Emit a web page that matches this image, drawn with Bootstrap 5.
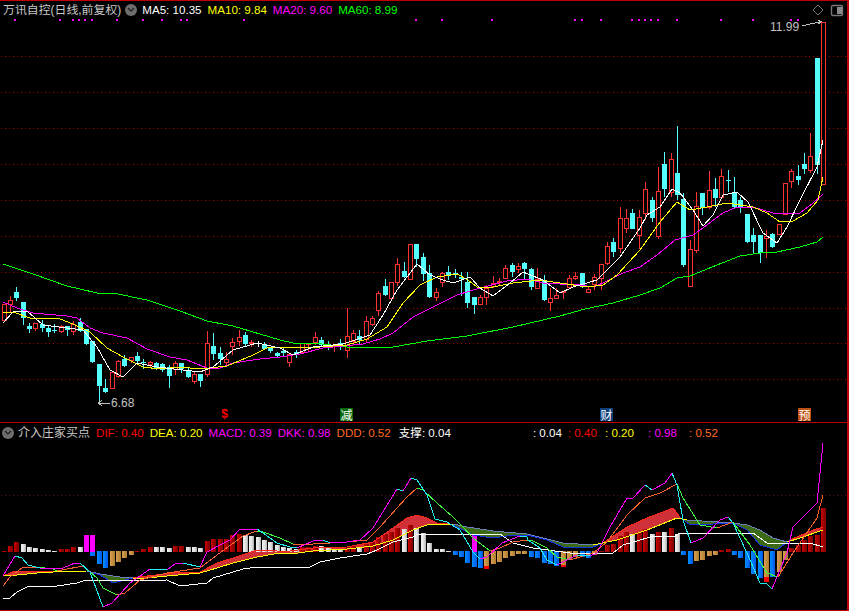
<!DOCTYPE html>
<html lang="zh">
<head>
<meta charset="utf-8">
<title>万讯自控</title>
<link rel="stylesheet" href="https://cdn.jsdelivr.net/npm/bootstrap@5.3.0/dist/css/bootstrap.min.css">
<style>
html,body{background:#000;margin:0;overflow:hidden}
.term{width:849px;height:611px;background:#000;font-family:"Liberation Sans","Noto Sans CJK SC",sans-serif;font-size:11.6px;line-height:14px;-webkit-font-smoothing:none}
.layer{width:849px;height:611px;shape-rendering:crispEdges}
.pane-up{height:423px;border-top:1px solid #c00000;border-bottom:1px solid #c00000;border-right:2px solid #c00000;width:849px;flex:none}
.pane-low{height:188px;border-bottom:1px solid #c00000;border-right:2px solid #c00000;width:849px;flex:none}
.legend{height:18px;padding-left:3px;white-space:nowrap}
.legend-low{height:18px;padding-left:2px;padding-top:1px;white-space:nowrap}
.ttl{color:#c8c8c8;font-size:11.9px;letter-spacing:0}
.ttl-low{color:#c8c8c8;font-size:12px;margin-left:4px;margin-right:6px}
.drop{width:12px;height:12px;border-radius:50%;background:#6e6e6e;flex:none;display:flex;align-items:center;justify-content:center}
.t-wh{color:#fff}.t-ye{color:#ff0}.t-ma{color:#f0f}.t-gr{color:#0f0}.t-re{color:#f00}.t-or{color:#ff6a20}
.up-items{gap:6px;margin-left:5px}
.low-items{gap:6px}
.gap-sup{margin-left:2px}
.gap-far{margin-left:76px}
.gap-near{margin-left:2px}
.gap-mid{margin-left:8px}
.gap-mid2{margin-left:6px}
.chip{width:13px;height:13px;font-size:12px;line-height:13px;text-align:center;color:#fff;left:0;top:408px;font-family:"Noto Sans CJK SC",sans-serif}
.chip-g{background:#0a6a0a;left:340px}
.chip-b{background:#0f3f7c;left:600px}
.chip-o{background:#c0500f;left:798px}
.chip-s{color:#f00;background:none;left:218px;font-weight:700;font-family:"Liberation Sans",sans-serif;font-size:12px}
.price{color:#c0c0c0;font-size:12px;line-height:14px}
.price-hi{left:770px;top:20px}
.price-lo{left:111px;top:396px}
</style>
</head>
<body>
<div class="term position-relative overflow-hidden">
  <svg id="chart" class="layer position-absolute top-0 start-0" viewBox="0 0 849 611" xmlns="http://www.w3.org/2000/svg"></svg>
  <div class="position-relative d-flex flex-column">
    <section class="pane-up">
      <div class="legend d-flex align-items-center">
        <span class="ttl">万讯自控(日线,前复权)</span>
        <span class="drop ms-1"><svg width="8" height="6" viewBox="0 0 8 6"><path d="M1 1l3 3 3-3" fill="none" stroke="#222" stroke-width="1.4"/></svg></span>
        <div class="d-flex up-items">
          <span class="t-wh">MA5: 10.35</span>
          <span class="t-ye">MA10: 9.84</span>
          <span class="t-ma">MA20: 9.60</span>
          <span class="t-gr">MA60: 8.99</span>
        </div>
      </div>
    </section>
    <section class="pane-low">
      <div class="legend-low d-flex align-items-center">
        <span class="drop"><svg width="8" height="6" viewBox="0 0 8 6"><path d="M1 1l3 3 3-3" fill="none" stroke="#222" stroke-width="1.4"/></svg></span>
        <span class="ttl-low">介入庄家买点</span>
        <div class="d-flex low-items">
          <span class="t-re">DIF: 0.40</span>
          <span class="t-ye">DEA: 0.20</span>
          <span class="t-ma">MACD: 0.39</span>
          <span class="t-ma">DKK: 0.98</span>
          <span class="t-or">DDD: 0.52</span>
          <span class="t-wh gap-sup">支撑: 0.04</span>
          <span class="t-wh gap-far">: 0.04</span>
          <span class="t-re">: 0.40</span>
          <span class="t-ye gap-near">: 0.20</span>
          <span class="t-ma gap-mid">: 0.98</span>
          <span class="t-or gap-mid2">: 0.52</span>
        </div>
      </div>
    </section>
  </div>
  <span class="price price-hi position-absolute">11.99</span>
  <span class="price price-lo position-absolute">6.68</span>
  <span class="chip chip-s position-absolute">$</span>
  <span class="chip chip-g position-absolute">减</span>
  <span class="chip chip-b position-absolute">财</span>
  <span class="chip chip-o position-absolute">预</span>
</div>
<script src="https://cdn.jsdelivr.net/npm/bootstrap@5.3.0/dist/js/bootstrap.bundle.min.js"></script>
<script>
var out=[];
function rect(x,y,w,h,f){out.push('<rect x="'+x+'" y="'+y+'" width="'+w+'" height="'+h+'" fill="'+f+'"/>');}
function pts(a){return a.map(function(p){return p[0]+','+p[1]}).join(' ');}
function poly(a,s,w){out.push('<polyline points="'+pts(a)+'" fill="none" stroke="'+s+'" stroke-width="'+(w||1)+'"/>');}
function xAt(i){return Math.round(3.5+6.353*i);}

out.push('<defs>'+
'<linearGradient id="gr"><stop offset="0" stop-color="#d00000"/><stop offset=".5" stop-color="#a00000"/><stop offset="1" stop-color="#800000"/></linearGradient>'+
'<linearGradient id="gw"><stop offset="0" stop-color="#f0f0f0"/><stop offset=".6" stop-color="#e0e0e0"/><stop offset="1" stop-color="#a8a8a8"/></linearGradient>'+
'<linearGradient id="gb"><stop offset="0" stop-color="#0090ff"/><stop offset="1" stop-color="#0058e8"/></linearGradient>'+
'<linearGradient id="gt"><stop offset="0" stop-color="#d8a050"/><stop offset="1" stop-color="#b07c30"/></linearGradient>'+
'</defs>');

/* grid */
[56,92,128,164,200,236,272,308,343,379].forEach(function(y){for(var x=1;x<846;x+=4){rect(x,y,1,1,'#a00000');}});
for(var gx=1;gx<846;gx+=4){rect(gx,495,1,1,'#601010');}
/* axis ticks */
for(var y=56;y<422;y+=17.9){rect(847,Math.round(y),2,1,'#c00000');}
/* signal dots */
[15,60,73,79,85,92,117,143,162,181,187,244,416,442,492,575,582,601,632,639,645,651,658,677,721,753,791,798].forEach(function(x){rect(x-1,19,2,2,'#ff00ff');});

/* candles: wickTop, bodyTop, bodyBottom, wickBottom, type */
var C=[
[304,304,321,321,'r'],[296,300,305,312,'r'],[287,292,298,301,'c'],[302,302,318,325,'c'],[323,326,329,333,'c'],[323,323,329,331,'r'],[320,324,328,332,'c'],[325,328,332,337,'c'],[324,330,331,333,'c'],[325,326,332,333,'r'],
[326,326,330,336,'c'],[321,324,332,335,'r'],[318,322,331,332,'c'],[329,329,344,345,'c'],[341,341,362,363,'c'],[364,364,386,405,'c'],[379,388,392,393,'c'],[372,372,389,389,'r'],[360,361,377,378,'r'],[355,359,366,367,'c'],
[357,357,361,363,'r'],[352,356,361,364,'c'],[359,362,363,369,'c'],[361,362,365,368,'r'],[362,363,369,370,'c'],[363,364,370,372,'c'],[365,367,376,388,'c'],[361,363,370,375,'r'],[363,363,369,373,'c'],[367,371,377,378,'c'],
[372,374,382,384,'r'],[374,374,381,387,'c'],[331,343,375,377,'r'],[333,346,354,360,'c'],[347,353,359,365,'c'],[352,359,363,365,'r'],[338,342,347,355,'r'],[330,337,342,346,'r'],[332,335,344,347,'c'],[340,342,344,347,'r'],
[341,343,344,347,'w'],[342,344,349,350,'c'],[348,348,351,353,'c'],[352,353,356,357,'c'],[348,351,353,356,'c'],[354,354,363,367,'r'],[350,352,354,358,'c'],[343,343,353,354,'r'],[343,343,345,351,'r'],[332,337,343,345,'r'],
[337,340,345,347,'c'],[341,344,347,350,'c'],[344,345,347,352,'r'],[339,343,347,350,'c'],[308,336,351,358,'r'],[330,333,342,345,'r'],[330,336,340,345,'c'],[316,321,340,343,'r'],[316,318,325,326,'r'],[291,293,311,316,'r'],
[279,286,295,296,'c'],[282,282,299,299,'r'],[258,264,283,286,'r'],[262,271,277,278,'c'],[244,244,280,280,'r'],[244,244,259,267,'c'],[253,257,274,281,'c'],[265,273,297,298,'c'],[288,292,298,301,'r'],[272,273,283,287,'r'],
[266,272,276,280,'c'],[269,273,274,278,'c'],[272,277,279,296,'c'],[272,282,303,308,'c'],[297,297,305,314,'c'],[295,297,305,305,'r'],[285,288,298,305,'r'],[276,283,287,288,'r'],[278,281,283,285,'r'],[265,268,279,279,'r'],
[263,265,272,277,'c'],[263,266,270,273,'r'],[262,263,269,279,'c'],[268,269,287,290,'c'],[268,279,289,289,'r'],[275,281,300,301,'c'],[288,298,303,311,'r'],[288,295,299,299,'r'],[291,291,293,299,'r'],[275,278,288,289,'r'],
[272,276,279,280,'r'],[273,273,285,288,'c'],[286,289,293,293,'r'],[274,277,285,290,'r'],[264,264,279,290,'r'],[242,246,264,265,'r'],[238,242,252,257,'c'],[207,218,249,253,'r'],[209,218,229,233,'r'],[209,213,229,229,'c'],
[210,217,236,249,'r'],[182,189,214,220,'r'],[197,200,218,222,'c'],[167,191,237,239,'r'],[152,164,189,197,'c'],[153,159,193,197,'r'],[126,173,195,200,'c'],[193,199,265,267,'c'],[240,249,287,287,'r'],[192,206,251,253,'r'],
[193,193,208,215,'c'],[171,190,208,209,'r'],[178,189,198,207,'c'],[169,176,198,199,'r'],[170,180,181,192,'c'],[177,192,207,208,'c'],[197,200,207,213,'c'],[214,214,242,243,'c'],[228,235,242,253,'c'],[235,235,253,263,'c'],
[230,236,239,258,'r'],[233,234,247,248,'c'],[224,224,235,235,'r'],[183,183,215,215,'r'],[169,171,182,188,'r'],[165,176,180,185,'c'],[153,164,169,174,'c'],[133,156,171,173,'r'],[58,58,165,174,'c'],[22,22,185,185,'r']
];
var CY='#54ffff',RD='#ff3232';
C.forEach(function(k,i){
  var x=xAt(i), col=k[4]=='r'?RD:(k[4]=='w'?'#fff':CY);
  if(k[0]<k[1]) rect(x,k[0],1,k[1]-k[0],col);
  if(k[3]>k[2]) rect(x,k[2],1,k[3]-k[2],col);
  if(k[4]=='r'){
    rect(x-2,k[1],5,Math.max(k[2]-k[1],2),col);
    if(k[2]-k[1]>2) rect(x-1,k[1]+1,3,k[2]-k[1]-2,'#000');
  } else {
    rect(x-2,k[1],5,Math.max(k[2]-k[1],1),col);
  }
});

/* moving averages */
var MA60=[[3,264],[33,274],[67,286],[97,293],[113,293],[147,300],[180,311],[207,321],[233,326],[280,340],[293,343],[313,343],[347,347],[393,347],[427,341],[467,336],[513,327],[560,316],[585,309],[613,303],[640,295],[660,288],[677,278],[690,276],[717,265],[740,256],[760,253],[777,252],[800,247],[817,242],[823,237]];
var MA20=[[3,302],[17,308],[33,313],[67,316],[77,318],[90,328],[103,333],[127,338],[147,349],[170,357],[187,360],[207,368],[220,368],[233,363],[260,359],[280,357],[300,354],[323,348],[363,344],[380,339],[393,333],[413,317],[437,305],[457,295],[480,288],[507,281],[527,279],[543,283],[560,284],[580,285],[593,287],[603,283],[623,273],[640,267],[657,255],[675,240],[693,235],[707,225],[723,213],[737,207],[753,207],[773,213],[800,213],[813,203],[823,194]];
var MA10=[[3,312],[13,312],[30,318],[60,319],[73,324],[90,332],[107,348],[123,357],[143,367],[160,369],[180,367],[200,369],[227,366],[253,355],[267,348],[280,347],[293,348],[320,347],[347,345],[367,339],[387,327],[403,303],[420,285],[437,277],[457,274],[468,280],[477,287],[493,287],[513,283],[540,280],[560,283],[587,287],[603,285],[617,275],[640,250],[660,222],[677,202],[690,210],[707,207],[727,203],[753,207],[767,213],[780,222],[793,221],[807,213],[818,200],[823,177]];
var MA5=[[3,323],[13,312],[27,311],[43,325],[67,328],[83,330],[97,347],[110,370],[123,377],[137,363],[157,367],[183,370],[200,372],[213,367],[233,350],[257,343],[280,348],[293,355],[313,347],[343,344],[370,335],[383,315],[397,290],[417,264],[430,275],[443,280],[453,283],[470,277],[480,288],[493,296],[510,283],[523,272],[543,280],[560,293],[573,287],[597,280],[620,257],[640,228],[647,215],[660,207],[672,189],[680,193],[693,210],[703,226],[713,215],[723,195],[737,192],[748,202],[763,233],[777,243],[787,227],[800,200],[817,167],[823,140]];
poly(MA60,'#00ff00');poly(MA20,'#ff00ff');poly(MA10,'#ffff00');poly(MA5,'#ffffff');

/* price arrows */
poly([[802,26],[821,21.5]],'#c0c0c0');poly([[818,20],[821.5,21.5],[818,24]],'#c0c0c0');
poly([[99,403],[110,403]],'#c0c0c0');poly([[102,400],[98.5,403],[102,406]],'#c0c0c0');

/* corner icons */
out.push('<path d="M818 5l5 5-5 5-5-5z" fill="none" stroke="#777" shape-rendering="auto"/>');
out.push('<rect x="831.5" y="5.5" width="11" height="10" rx="1.5" fill="none" stroke="#777" stroke-width="1.4" shape-rendering="auto"/>');
rect(837,7,5,7,'#8a8a8a');

/* DEA and DIF band */
var DEA=[[3,576],[17,575],[37,573],[53,572],[87,571],[100,574],[120,577],[133,578],[147,578],[167,576],[200,573],[217,568],[233,563],[257,557],[280,553],[298,553],[313,551],[347,549],[373,546],[393,540],[413,530],[427,525],[447,524],[453,524],[467,527],[493,531],[527,534],[563,543],[593,545],[617,540],[647,530],[677,518],[687,520],[733,523],[747,525],[760,530],[773,538],[787,542],[800,538],[823,530]];
var DIF=[[3,576],[15,571],[33,571],[53,572],[87,571],[100,575],[113,583],[133,578],[147,576],[173,573],[200,572],[217,563],[233,558],[257,550],[277,551],[290,551],[313,548],[347,547],[373,542],[393,528],[407,518],[417,515],[427,518],[437,523],[450,524],[457,527],[473,535],[493,538],[507,536],[527,535],[547,540],[563,547],[593,547],[603,543],[627,527],[647,518],[673,508],[680,517],[690,525],[713,524],[733,523],[747,530],[760,545],[777,550],[790,540],[813,530],[823,527]];
function at(a,x){for(var i=1;i<a.length;i++){if(x<=a[i][0]){var p=a[i-1],q=a[i];return p[1]+(q[1]-p[1])*(x-p[0])/(q[0]-p[0]);}}return a[a.length-1][1];}
for(var x=3;x<823;x++){
  var a=at(DEA,x+.5),b=at(DIF,x+.5);
  if(b<a-0.3) rect(x,Math.round(b),1,Math.max(Math.round(a)-Math.round(b),1),'#d03038');
  else if(b>a+0.3) rect(x,Math.round(a),1,Math.max(Math.round(b)-Math.round(a),1),'#3c6a14');
}

/* MACD bars: value (+ up, - down), type */
var B=[[1,'r'],[6,'r'],[10,'r'],[8,'w'],[5,'w'],[4,'w'],[2.5,'w'],[2,'w'],[1,'w'],[2.5,'r'],[2.5,'r'],[5,'r'],[5,'w'],[17,'m'],[17,'m',-4],[-12,'b'],[-16,'b'],[-14,'t'],[-10,'t'],[-6,'t'],[-2.5,'t'],[1,'r'],[2.5,'r'],[5,'r'],[5,'w'],[5,'w'],[4,'w'],[6,'r'],[6,'r'],[5,'w'],[5,'w'],[4,'w'],[11,'r'],[13,'r'],[13,'r'],[13,'r'],[17,'r'],[18,'r'],[17,'w'],[16,'w'],[15,'w'],[12,'w'],[10,'w'],[7,'w'],[5,'w'],[4,'w'],[3,'w'],[5,'r'],[5,'r'],[6,'r'],[6,'w'],[4,'w'],[3,'w'],[3,'w'],[5,'r'],[6,'r'],[5,'w'],[8,'r'],[10,'r'],[15,'r'],[18,'r'],[20,'r'],[24,'r'],[23,'w'],[27,'r'],[24,'w'],[19,'w'],[9,'w'],[3,'w'],[3,'w'],[1,'w'],[-3,'b'],[-5,'b'],[-11,'b'],[-15,'b',18],[-16,'b'],[-14,'t',-17],[-12,'t'],[-10,'t'],[-6,'t'],[-4,'t'],[-2,'t'],[-2,'t'],[-5,'b'],[-6,'b'],[-11,'b'],[-12,'b'],[-14,'b'],[-13,'t',-15],[-8,'t'],[-5,'t'],[-5,'b'],[-6,'b'],[-3,'t'],[1,'r'],[7,'r'],[8,'r'],[16,'r'],[20,'r'],[18,'w'],[20,'r'],[23,'r'],[18,'w'],[20,'r'],[20,'w'],[24,'r'],[18,'w'],[-3,'b'],[-12,'b'],[-9,'t'],[-8,'t'],[-4,'t'],[-3,'t'],[2,'r'],[3,'r'],[-3,'b'],[-6,'b'],[-16,'b'],[-22,'b'],[-26,'b'],[-25,'t',-30],[-25,'b'],[-20,'t'],[-8,'t'],[4,'r'],[7,'r'],[12,'r'],[16,'r'],[17,'r'],[44,'r']];
var F={r:'url(#gr)',w:'url(#gw)',b:'url(#gb)',t:'url(#gt)',m:'#ff00ff'};
var base=552;
B.forEach(function(v,i){
  var x=xAt(i)-2,h=v[0],f=F[v[1]];
  if(h>0) rect(x,base-Math.round(h),5,Math.round(h),f);
  else rect(x,base-1,5,Math.round(-h)+1,f);
  if(v[2]!==undefined){
    if(v[2]>0) rect(x,base-v[2],5,v[2],'#ff00ff');
    else if(v[1]=='m') rect(x,base,5,-v[2],'#0070ff');
    else rect(x,base-h,5,h-v[2],'#ff0000');
  }
});

/* band edges */
function twoTone(a,other,above,cols){
  for(var i=1;i<a.length;i++){
    var p=a[i-1],q=a[i],mx=(p[0]+q[0])/2,c=at(other,mx),v=(p[1]+q[1])/2;
    var col=above(v,c)?cols[0]:cols[1];
    out.push('<line x1="'+p[0]+'" y1="'+p[1]+'" x2="'+q[0]+'" y2="'+q[1]+'" stroke="'+col+'" stroke-width="1"/>');
  }
}
twoTone(DIF,DEA,function(v,c){return v<=c+.3},['#ff2818','#1030e8']);
twoTone(DEA,DIF,function(v,c){return c<=v+.3},['#ffff00','#6c80b4']);

/* white support line */
poly([[3,598],[10,598],[17,592],[27,587],[57,586],[77,583],[83,581],[167,580],[180,586],[207,583],[213,578],[243,569],[257,567],[310,567],[320,562],[340,558],[367,554],[377,550],[393,542],[413,537],[418,534],[500,534],[513,543],[533,548],[570,553],[613,553],[623,545],[647,538],[653,536],[675,536],[680,533],[753,533],[767,543],[810,543],[823,547]],'#ffffff',1);

/* trend coloured lines */
function trend(a,upC,dnC){
  for(var i=1;i<a.length;i++){
    var p=a[i-1],q=a[i];
    out.push('<line x1="'+p[0]+'" y1="'+p[1]+'" x2="'+q[0]+'" y2="'+q[1]+'" stroke="'+(q[1]<=p[1]?upC:dnC)+'" stroke-width="1"/>');
  }
}
var LA=[[3,576],[15,556],[22,558],[28,565],[40,568],[63,568],[75,563],[80,563],[90,572],[103,607],[112,603],[130,583],[150,569],[167,570],[175,564],[183,563],[200,567],[207,552],[220,545],[230,540],[240,529],[257,529],[263,533],[277,543],[290,547],[297,548],[313,541],[323,540],[330,543],[347,542],[360,540],[373,528],[397,489],[403,491],[411,478],[417,480],[427,495],[435,519],[447,522],[460,530],[473,552],[480,559],[487,557],[502,543],[520,536],[527,537],[528,540],[540,548],[547,560],[557,565],[577,555],[590,556],[597,553],[610,527],[627,498],[633,498],[645,485],[652,490],[665,483],[672,473],[677,485],[683,520],[691,543],[703,538],[720,520],[728,517],[733,523],[747,553],[760,583],[767,584],[772,589],[787,553],[793,527],[817,503],[823,443]];
var LB=[[3,586],[10,577],[22,568],[37,567],[53,569],[57,571],[83,566],[97,578],[103,588],[117,595],[125,593],[140,580],[167,573],[200,568],[217,555],[243,536],[257,531],[263,532],[280,538],[293,544],[313,544],[347,542],[367,540],[380,527],[397,508],[407,497],[417,488],[423,490],[437,503],[453,517],[463,527],[473,538],[490,551],[500,548],[513,542],[527,540],[533,541],[547,548],[557,557],[570,560],[593,553],[607,542],[627,515],[645,498],[660,493],[677,484],[683,498],[700,525],[717,528],[733,522],[735,525],[750,545],[767,573],[778,577],[793,553],[817,518],[823,495]];
trend(LB,'#ff6030','#40ff40');
trend(LA,'#ff00ff','#20f0f0');

document.getElementById('chart').innerHTML=out.join('');
</script>
</body>
</html>
